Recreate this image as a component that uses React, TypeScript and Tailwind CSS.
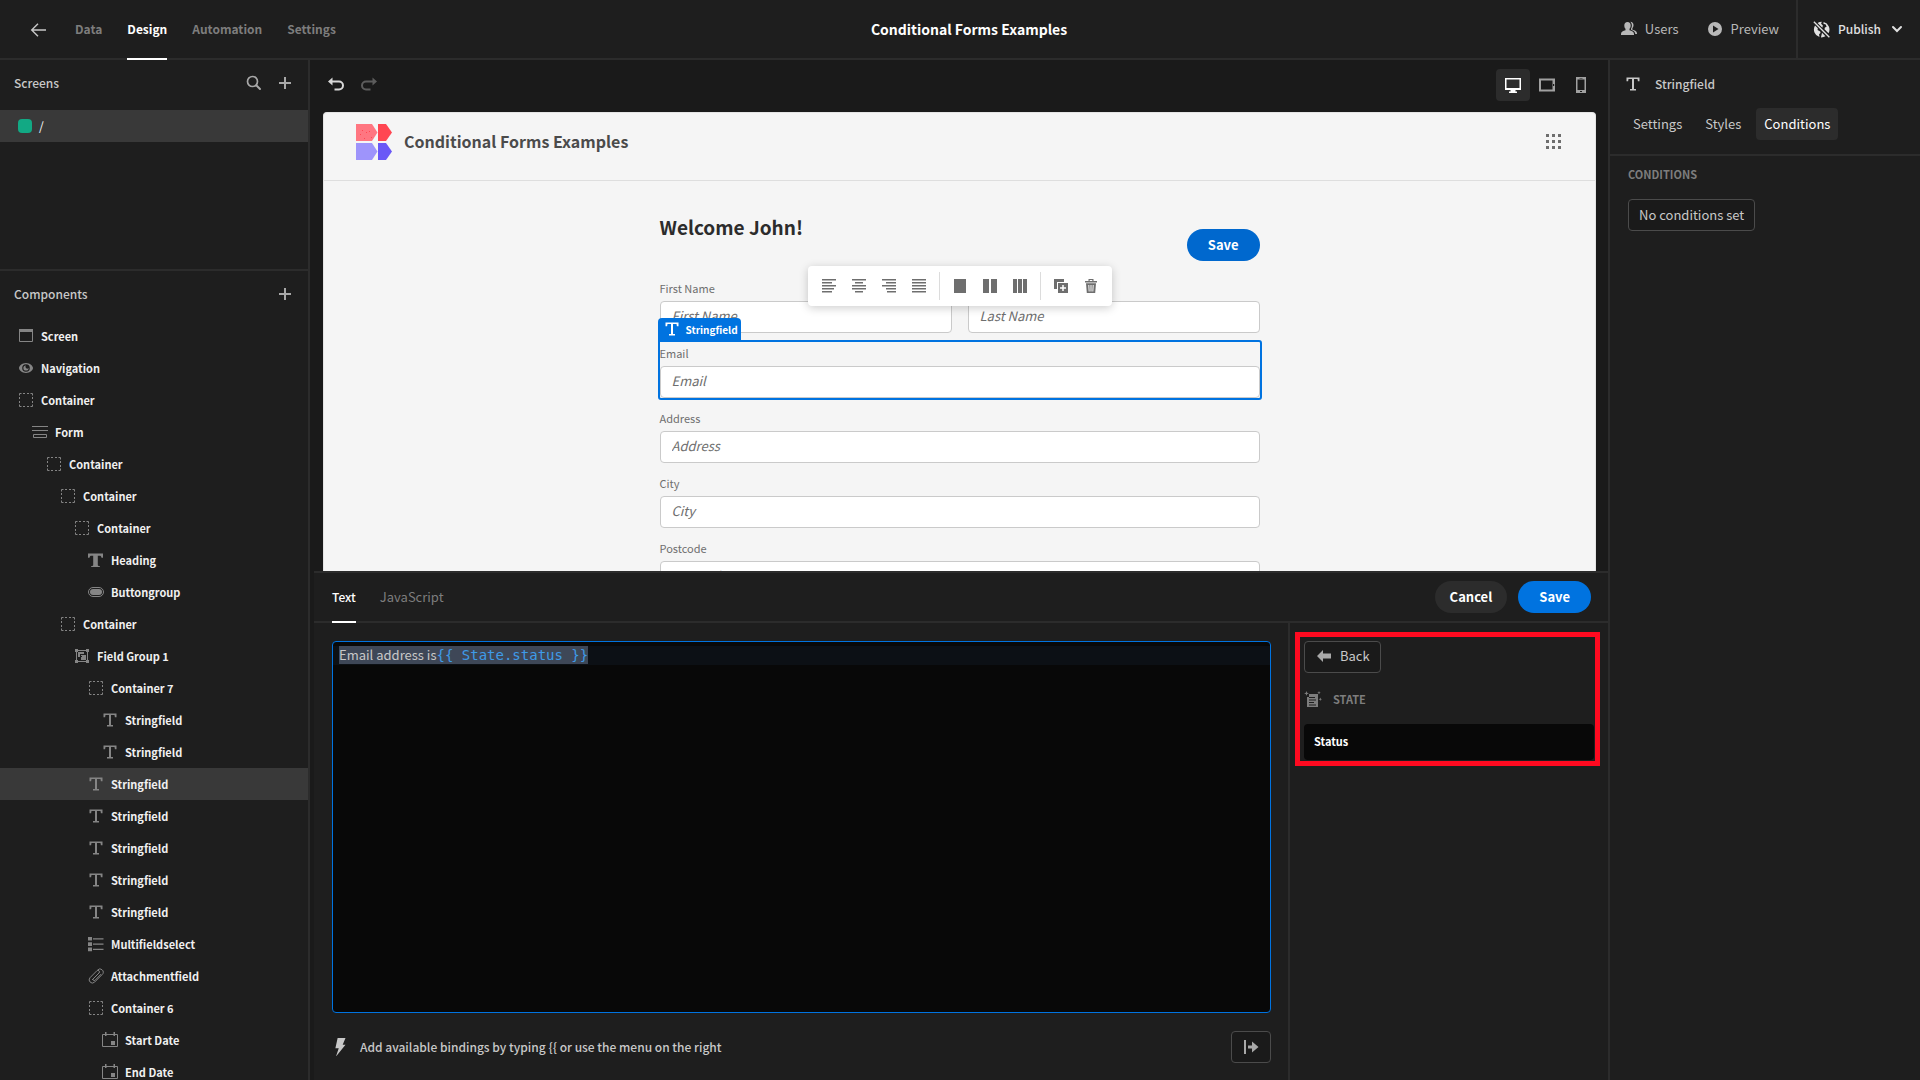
import React from "react";

type IconProps = { className?: string };

function Svg({ children, className = "size-4", box = 16 }: IconProps & { children: React.ReactNode; box?: number }) {
  return (
    <svg viewBox={`0 0 ${box} ${box}`} className={`${className} shrink-0`} fill="currentColor" aria-hidden="true">
      {children}
    </svg>
  );
}

const ContainerIcon = () => (
  <Svg>
    <path
      fill="none"
      stroke="currentColor"
      d="M1.5 3.5v-2h2M5 1.5h2M9 1.5h2M12.500 1.500h2v2M14.500 5v2M14.500 9v2M14.500 12.500v2h-2M11 14.500H9M7 14.500H5M3.500 14.500h-2v-2M1.500 11V9M1.500 7V5"
    />
  </Svg>
);
const ScreenIcon = () => (
  <Svg>
    <path d="M1 1h14v3H1z" />
    <path fill="none" stroke="currentColor" d="M1.500 1.500h13v12h-13z" />
  </Svg>
);
const EyeIcon = () => (
  <Svg>
    <path
      fillRule="evenodd"
      d="M8 3C4 3 1 6 1 8s3 5 7 5 7-3 7-5-3-5-7-5zm0 1.200a3.800 3.800 0 1 1 0 7.600 3.800 3.800 0 0 1 0-7.600z"
    />
    <path fillRule="evenodd" d="M8 5.400A2.600 2.600 0 1 0 10.600 8 1.300 1.300 0 0 1 8 5.400z" />
  </Svg>
);
const FormIcon = () => (
  <Svg>
    <path fill="none" stroke="currentColor" d="M0 2.500h16M0 6.500h16M1.500 10.500h13v3h-13z" />
  </Svg>
);
const HeadingIcon = () => (
  <Svg>
    <path d="M0 1.500h15v4.300h-1.500C13.300 4.300 12.800 3.700 11.500 3.700h-1.700V13c0 .7.500 1 2 1v1H3.200v-1c1.500 0 2-.3 2-1V3.700H3.500C2.200 3.700 1.700 4.300 1.500 5.800H0z" />
  </Svg>
);
const ButtonIcon = () => (
  <Svg>
    <rect x="0.500" y="3.500" width="15" height="9" rx="4.500" fill="none" stroke="currentColor" />
    <rect x="2" y="5" width="12" height="6" rx="3" />
  </Svg>
);
const GroupIcon = () => (
  <Svg>
    <path fill="none" stroke="currentColor" d="M2.500 2.500h11v11h-11z" />
    <path d="M1 1h3v3H1zM12 1h3v3h-3zM1 12h3v3H1zM12 12h3v3h-3z" />
    <path fillRule="evenodd" d="M4 4h6v2H6v3H4zM7 7h5v5H7V9h1V8H7z" />
  </Svg>
);
const TextIcon = ({ className }: IconProps) => (
  <Svg className={className}>
    <path d="M1.500 1.500h13v3.700h-1.600L12.500 3H9v10h2v1.500H5V13h2V3H3.500l-.4 2.200H1.500z" />
  </Svg>
);
const ListIcon = () => (
  <Svg>
    <path d="M0 1h4v3.600H0zM5 2.200h10.500v1.200H5zM0 6.300h4v3.600H0zM5 7.500h10.500v1.200H5zM0 11.600h4v3.600H0zM5 12.800h10.500V14H5z" />
  </Svg>
);
const ClipIcon = () => (
  <Svg>
    <path
      fill="none"
      stroke="currentColor"
      strokeLinecap="round"
      d="M4.300 11.700 11 5a1.500 1.500 0 0 0-2.200-2.200L1.900 9.800a3.200 3.200 0 0 0 4.500 4.500l7.700-7.700a3 3 0 0 0 0-4.800 3 3 0 0 0-4.300 0M11 5l-5.600 5.700a1.100 1.100 0 0 0 1.600 1.600l5.800-5.900"
    />
  </Svg>
);
const DateIcon = () => (
  <Svg>
    <path fill="none" stroke="currentColor" d="M.500 2.500h15v12H.500z" />
    <path d="M3 0h1.500v4H3zM11.500 0H13v4h-1.500zM9 9h4v4H9z" />
  </Svg>
);

type Kind = keyof typeof kinds;
const kinds = {
  screen: ScreenIcon,
  eye: EyeIcon,
  container: ContainerIcon,
  form: FormIcon,
  heading: HeadingIcon,
  button: ButtonIcon,
  group: GroupIcon,
  text: TextIcon,
  list: ListIcon,
  clip: ClipIcon,
  date: DateIcon,
};

const tree: { label: string; depth: number; kind: Kind; selected?: boolean }[] = [
  { label: "Screen", depth: 0, kind: "screen" },
  { label: "Navigation", depth: 0, kind: "eye" },
  { label: "Container", depth: 0, kind: "container" },
  { label: "Form", depth: 1, kind: "form" },
  { label: "Container", depth: 2, kind: "container" },
  { label: "Container", depth: 3, kind: "container" },
  { label: "Container", depth: 4, kind: "container" },
  { label: "Heading", depth: 5, kind: "heading" },
  { label: "Buttongroup", depth: 5, kind: "button" },
  { label: "Container", depth: 3, kind: "container" },
  { label: "Field Group 1", depth: 4, kind: "group" },
  { label: "Container 7", depth: 5, kind: "container" },
  { label: "Stringfield", depth: 6, kind: "text" },
  { label: "Stringfield", depth: 6, kind: "text" },
  { label: "Stringfield", depth: 5, kind: "text", selected: true },
  { label: "Stringfield", depth: 5, kind: "text" },
  { label: "Stringfield", depth: 5, kind: "text" },
  { label: "Stringfield", depth: 5, kind: "text" },
  { label: "Stringfield", depth: 5, kind: "text" },
  { label: "Multifieldselect", depth: 5, kind: "list" },
  { label: "Attachmentfield", depth: 5, kind: "clip" },
  { label: "Container 6", depth: 5, kind: "container" },
  { label: "Start Date", depth: 6, kind: "date" },
  { label: "End Date", depth: 6, kind: "date" },
];

const indents = ["pl-[18px]", "pl-8", "pl-[46px]", "pl-[60px]", "pl-[74px]", "pl-[88px]", "pl-[102px]"];

const PlusIcon = () => (
  <Svg className="size-4 text-[#a8a8a8]">
    <path d="M7 2h2v5h5v2H9v5H7V9H2V7h5z" />
  </Svg>
);

function Header() {
  return (
    <header className="flex h-[60px] shrink-0 items-stretch justify-between border-b-2 border-[#2c2c2c]">
      <div className="flex flex-1 items-stretch">
        <button aria-label="Back to apps" className="mr-7 ml-[30px] text-[#c8c8c8]">
          <Svg className="size-[17px]" box={17}>
            <path fill="none" stroke="currentColor" strokeWidth="1.400" d="M16 9H2M8 2.700 1.700 9 8 15.300" />
          </Svg>
        </button>
        <nav className="flex gap-[25px] text-[12px] font-bold text-[#7d7d7d]">
          {["Data", "Design", "Automation", "Settings"].map((t) => (
            <a
              key={t}
              href={`#${t.toLowerCase()}`}
              className={
                t === "Design"
                  ? "-mb-[2px] flex items-center border-b-2 border-white text-white"
                  : "flex items-center"
              }
            >
              {t}
            </a>
          ))}
        </nav>
      </div>
      <h1 className="flex items-center pl-[18px] text-[14px] font-bold text-white">Conditional Forms Examples</h1>
      <div className="flex flex-1 items-stretch justify-end text-[13px] text-[#b8b8b8]">
        <button className="mr-7 flex items-center gap-2">
          <Svg>
            <path d="M6.500 1c2 0 3.200 1.400 3.200 3.500 0 1.400-.5 2.600-1.200 3.300v1.400c2.300.6 4.500 1.600 4.500 3.800v1H0v-1c0-2.200 2.200-3.200 4.500-3.800V7.800c-.7-.7-1.200-1.900-1.200-3.300C3.300 2.400 4.500 1 6.500 1z" />
            <path d="M9.300.7c2 0 3.200 1.300 3.200 3.400 0 1.400-.4 2.400-1.100 3.200v1.500c2.600.6 4.600 1.500 4.600 3.600v.6h-1.700c-.2-2.200-2-3.500-4.300-4.300v-.9c.6-.9.9-2 .9-3.200 0-1.700-.6-3-1.600-3.900z" />
          </Svg>
          Users
        </button>
        <button className="mr-[17px] flex items-center gap-2">
          <Svg>
            <path fillRule="evenodd" d="M8 1a7 7 0 1 0 0 14A7 7 0 0 0 8 1zM6 4.500 11.500 8 6 11.500z" />
          </Svg>
          Preview
        </button>
        <button className="flex items-center gap-2 border-l-2 border-[#2c2c2c] pr-[15px] pl-[15px] text-[12px] font-medium text-[#e0e0e0]">
          <Svg className="size-[17px]">
            <path d="M4.300 1.900A7.400 7.400 0 0 1 8.300.6L7.600 2.600l1.700 1.600-.5 2.200zM10 .9a7.400 7.400 0 0 1 4.600 10.700l-3.800-3.800.4-1.600 1.600-.7-.8-2.200-2.200-.6zM1.900 4.300l2.600 2.600-.2 1.600 2.500 1.400.3 1.300-1.400 1.300.4 2.600A7.400 7.400 0 0 1 1.900 4.300zM8.500 11l3.200 3.400a7.400 7.400 0 0 1-4.200 1z" />
            <path stroke="currentColor" strokeWidth="1.300" d="m.8.8 14.600 14.600" />
          </Svg>
          Publish
          <Svg>
            <path fill="none" stroke="currentColor" strokeWidth="2" strokeLinecap="round" d="M4 6l4 4 4-4" />
          </Svg>
        </button>
      </div>
    </header>
  );
}

function Sidebar() {
  return (
    <aside className="flex w-[310px] shrink-0 flex-col border-r-2 border-[#2c2c2c]">
      <section className="flex h-[211px] shrink-0 flex-col border-b-2 border-[#2c2c2c]">
        <div className="flex h-[50px] items-center gap-[15px] pr-[15px] pb-1 pl-[14px]">
          <h2 className="flex-1 text-[12px] font-medium text-[#c8c8c8]">Screens</h2>
          <button aria-label="Search screens" className="text-[#a8a8a8]">
            <Svg>
              <circle cx="6.500" cy="6.500" r="5" fill="none" stroke="currentColor" strokeWidth="1.700" />
              <path stroke="currentColor" strokeWidth="2" strokeLinecap="round" d="m10.500 10.500 3.500 3.500" />
            </Svg>
          </button>
          <button aria-label="Add screen">
            <PlusIcon />
          </button>
        </div>
        <button className="flex h-8 items-center gap-[7px] bg-[#393939] pl-[18px] text-[12px] text-white">
          <span className="size-[14px] rounded-[4px] bg-[#12a984]" />/
        </button>
      </section>
      <section className="flex min-h-0 flex-1 flex-col overflow-hidden">
        <div className="flex h-[49px] shrink-0 items-center pr-[15px] pb-[3px] pl-[14px]">
          <h2 className="flex-1 text-[12px] font-medium text-[#c8c8c8]">Components</h2>
          <button aria-label="Add component">
            <PlusIcon />
          </button>
        </div>
        <ul className="shrink-0">
          {tree.map((n, i) => {
            const Icon = kinds[n.kind];
            return (
              <li key={i} className={n.selected ? "bg-[#393939]" : ""}>
                <button
                  className={`flex h-8 w-full items-center gap-[7px] text-[11px] font-bold text-[#f0f0f0] ${indents[n.depth]}`}
                >
                  <span className="text-[#858585]">
                    <Icon />
                  </span>
                  {n.label}
                </button>
              </li>
            );
          })}
        </ul>
      </section>
    </aside>
  );
}

function Field({ label }: { label: string }) {
  return (
    <label className="block min-w-0 flex-1 text-[11px] leading-[22px] text-[#6e6e6e]">
      <span className="block h-6">{label}</span>
      <input
        placeholder={label}
        className="block h-8 w-full rounded-[4px] border border-[#cacaca] bg-white px-[11px] pb-[3px] text-[13px] placeholder:text-[#6e6e6e] placeholder:italic"
      />
    </label>
  );
}

const bars = (widths: number[], align: "l" | "c" | "r") =>
  widths.map((w, i) => {
    const x = align === "l" ? 1 : align === "r" ? 15 - w : 8 - w / 2;
    return <path key={i} d={`M${x} ${1 + i * 3}h${w}v1.500h-${w}z`} />;
  });

const tools: { name: string; art: React.ReactNode; divider?: boolean }[] = [
  { name: "Align left", art: bars([14, 10, 14, 12, 10], "l") },
  { name: "Align center", art: bars([14, 8, 14, 14, 8], "c") },
  { name: "Align right", art: bars([14, 10, 14, 10, 9], "r") },
  { name: "Justify", art: bars([14, 14, 14, 14, 14], "l") },
  { name: "One column", art: <path d="M2 1h12v14H2z" />, divider: true },
  { name: "Two columns", art: <path d="M1 1h6v14H1zM9 1h6v14H9z" /> },
  { name: "Three columns", art: <path d="M1 1h4v14H1zM6 1h4v14H6zM11 1h4v14h-4z" /> },
  {
    name: "Duplicate",
    art: (
      <path
        fillRule="evenodd"
        d="M1 1h10v3H4v7H1zM5 5h10v10H5zM9.250 7v2.250H7v1.500h2.250V13h1.500v-2.250H13v-1.500h-2.250V7z"
      />
    ),
    divider: true,
  },
  {
    name: "Delete",
    art: (
      <path
        fillRule="evenodd"
        d="M5.500 1h5v2H14v1.500H2V3h3.500zM6.700 2v1h2.600V2zM3 5.300h10L12.200 15H3.800zM5.300 7l.4 6.500h.9L6.300 7zM7.500 7v6.500h1V7zM9.700 7l-.3 6.500h.9l.4-6.500z"
      />
    ),
  },
];

function FloatingToolbar() {
  return (
    <div
      role="toolbar"
      aria-label="Component layout"
      className="absolute top-[37px] left-1/2 z-20 flex h-10 -translate-x-1/2 items-center rounded-[4px] bg-white px-[6px] text-[#6e6e6e] shadow-[0_2px_10px_rgba(0,0,0,0.2)]"
    >
      {tools.map((t) => (
        <React.Fragment key={t.name}>
          {t.divider && <span className="mx-[5px] h-7 w-px bg-[#dcdcdc]" />}
          <button aria-label={t.name} className="flex w-[30px] justify-center">
            <Svg>{t.art}</Svg>
          </button>
        </React.Fragment>
      ))}
    </div>
  );
}

function Preview() {
  return (
    <div className="mr-3 ml-[13px] min-h-0 flex-1 overflow-hidden rounded-t-[4px] border border-b-0 border-[#e4e4e4] bg-[#f5f5f5] text-[#4b4b4b]">
      <div className="flex h-[68px] items-start justify-between border-b border-[#dedede] pr-[33px] pl-8">
        <div className="flex items-start gap-3 pt-[11px]">
          <svg viewBox="0 0 36 36" className="size-9" aria-hidden="true">
            <path fill="#ff7681" d="M0 0h16l5.500 8.500L16 17H0z" />
            <path fill="#ff4652" d="M22 0h8l6 8.500-6 8.500h-8z" />
            <path fill="#9e94fb" d="M0 19h16l5.500 8.500L16 36H0z" />
            <path fill="#6a58f6" d="M22 19h8l6 8.500-6 8.500h-8z" />
            <path fill="#ff4652" d="M6 6h1v1H6zM10 8h1v1h-1zM13 7h1v1h-1zM4 10h1v1H4zM8 14h1v1H8zM15 13h1v1h-1z" />
          </svg>
          <h2 className="text-[16px] leading-[34px] font-bold">Conditional Forms Examples</h2>
        </div>
        <button aria-label="Apps" className="pt-[20px] text-[#6e6e6e]">
          <Svg className="size-[17px]" box={17}>
            <path d="M1 1h3v3H1zM7 1h3v3H7zM13 1h3v3h-3zM1 7h3v3H1zM7 7h3v3H7zM13 7h3v3h-3zM1 13h3v3H1zM7 13h3v3H7zM13 13h3v3h-3z" />
          </Svg>
        </button>
      </div>
      <form className="mx-auto w-full max-w-[600px] pt-[32px]" onSubmit={(e) => e.preventDefault()}>
        <div className="flex h-16 justify-between">
          <h3 className="text-[19px] leading-7 font-bold text-[#2c2c2c]">Welcome John!</h3>
          <button className="mt-4 h-8 rounded-full bg-[#0068ce] px-[21px] text-[13px] font-bold text-white">Save</button>
        </div>
        <div className="relative flex flex-col gap-[9px]">
          <div className="flex gap-4">
            <Field label="First Name" />
            <Field label="Last Name" />
          </div>
          <div className="relative">
            <Field label="Email" />
            <div className="pointer-events-none absolute -inset-x-[2px] -top-[2px] -bottom-[2px] rounded-[3px] rounded-tl-none border-2 border-[#0073e0]" />
            <div className="absolute bottom-full -left-[2px] z-10 flex h-6 items-center gap-[6px] rounded-t-[4px] bg-[#0073e0] pr-[3px] pb-[2px] pl-[6px] text-[10px] font-bold text-white">
              <TextIcon />
              Stringfield
            </div>
          </div>
          <Field label="Address" />
          <Field label="City" />
          <Field label="Postcode" />
          <div className="absolute inset-x-0 -top-[48px]">
            <FloatingToolbar />
          </div>
        </div>
      </form>
    </div>
  );
}

function BindingDrawer() {
  return (
    <section className="ml-1 flex h-[509px] shrink-0 flex-col border-t-2 border-[#2c2c2c] bg-[#1e1e1e]">
      <div className="flex h-[50px] shrink-0 items-stretch border-b-2 border-[#2c2c2c] pr-[17px] pl-[18px] text-[13px]">
        <div role="tablist" className="flex flex-1 gap-6">
          <button
            role="tab"
            aria-selected="true"
            className="-mb-[2px] border-b-2 border-white text-[12px] font-medium text-white"
          >
            Text
          </button>
          <button role="tab" aria-selected="false" className="text-[#7d7d7d]">
            JavaScript
          </button>
        </div>
        <div className="flex items-center gap-[11px] font-bold text-white">
          <button className="h-8 rounded-full bg-[#2c2c2c] px-[15px]">Cancel</button>
          <button className="h-8 rounded-full bg-[#0073e0] px-[21px]">Save</button>
        </div>
      </div>
      <div className="flex min-h-0 flex-1">
        <div className="flex min-w-0 flex-1 flex-col pr-[17px] pb-[17px] pl-[18px] pt-[18px]">
          <div
            role="textbox"
            aria-label="Binding text"
            aria-multiline="true"
            className="min-h-0 flex-1 overflow-hidden rounded-[4px] border border-[#0073e0] bg-[#080808] pt-1"
          >
            <div className="h-[19px] bg-[#0c1015] pl-[6px] text-[13px] leading-[18px] text-[#c8c8c8]">
              <span className="inline-flex h-[18px] items-center bg-[#3e4757] whitespace-pre">
                Email address is
                <span className="font-['DejaVu_Sans_Mono',monospace] text-[14px] text-[#3f9be8]">
                  {"{{ State.status }}"}
                </span>
              </span>
            </div>
          </div>
          <div className="mt-[18px] flex h-8 shrink-0 items-center text-[12px] font-medium text-[#c8c8c8]">
            <Svg className="mr-[10px] size-[18px]">
              <path d="M5 0h7L9.500 6H12L3.500 16.500 6 9H3z" />
            </Svg>
            <p className="flex-1">{"Add available bindings by typing {{ or use the menu on the right"}</p>
            <button
              aria-label="Collapse bindings menu"
              className="flex h-8 w-10 items-center justify-center rounded-[4px] border border-[#4b4b4b] bg-[#1a1a1a] text-[#a8a8a8]"
            >
              <Svg>
                <path d="M1 1h2v14H1zM5 6.500h4V2.500L15.500 8 9 13.500v-4H5z" />
              </Svg>
            </button>
          </div>
        </div>
        <div className="w-[320px] shrink-0 border-l-2 border-[#2c2c2c] pt-[9px] pr-2 pl-[5px]">
          <div className="h-[134px] border-[5px] border-[#ff0a20] pt-1 pr-[1px] pl-1">
            <button className="flex h-8 items-center gap-2 rounded-[4px] border border-[#4b4b4b] bg-[#1a1a1a] pr-[10px] pb-[2px] pl-[11px] text-[13px] text-[#c8c8c8]">
              <Svg className="size-4 text-[#a8a8a8]">
                <path d="M1 8l6-6v3.500h8v5H7V14z" />
              </Svg>
              Back
            </button>
            <div className="flex h-[51px] items-center gap-[11px] pt-[2px] text-[11px] font-bold text-[#7d7d7d]">
              <Svg className="size-[18px]" box={18}>
                <path
                  fillRule="evenodd"
                  d="M5 3h9v13H3V6h2zM5 6v1h6V6zM5 8.500v1h7v-1zM5 11v1h5v-1zM5 13.500v1h7v-1z"
                />
                <path d="M2.500 0l.7 1.700 1.700.7-1.700.7-.7 1.700-.7-1.700L.1 2.400l1.700-.7zM15 0l.5 1.200 1.200.5-1.200.5-.5 1.200-.5-1.200-1.200-.5 1.200-.5zM16.300 6.500l.5 1.200 1.200.5-1.200.5-.5 1.200-.5-1.200-1.200-.5 1.200-.5z" />
              </Svg>
              <h4>STATE</h4>
            </div>
            <button className="block h-9 w-full rounded-[4px] bg-[#080808] pb-[2px] pl-[10px] text-left text-[11px] font-bold text-white">
              Status
            </button>
          </div>
        </div>
      </div>
    </section>
  );
}

function Canvas() {
  return (
    <main className="flex min-w-0 flex-1 flex-col bg-[#1a1a1a]">
      <div className="flex h-[52px] shrink-0 items-center justify-between pr-[10px] pb-[2px] pl-[18px]">
        <div className="flex gap-[17px]">
          <button aria-label="Undo" className="text-[#d8d8d8]">
            <Svg>
              <path d="M0 4.500 4.500.5v3H11a5 5 0 0 1 0 10H6.500v-2H11a3 3 0 0 0 0-6H4.500v3z" />
            </Svg>
          </button>
          <button aria-label="Redo" className="text-[#5c5c5c]">
            <Svg>
              <path d="M16 4.500 11.500.5v3H5a5 5 0 0 0 0 10h4.500v-2H5a3 3 0 0 1 0-6h6.500v3z" />
            </Svg>
          </button>
        </div>
        <div className="flex">
          <button
            aria-label="Desktop"
            className="flex h-8 w-[34px] items-center justify-center rounded-[4px] bg-[#2c2c2c] text-white"
          >
            <Svg>
              <path fillRule="evenodd" d="M0 1h16v12h-5.500v1.500H12V16H4v-1.500h1.500V13H0zM1.500 2.500v8.500h13V2.500z" />
            </Svg>
          </button>
          <button aria-label="Tablet" className="flex h-8 w-[34px] items-center justify-center text-[#a0a0a0]">
            <Svg>
              <path fillRule="evenodd" d="M0 1.500h16v13H0zM2 3.500v9h11.500v-9zM14 7v2h1.200V7z" />
            </Svg>
          </button>
          <button aria-label="Mobile" className="flex h-8 w-[34px] items-center justify-center text-[#a0a0a0]">
            <Svg>
              <path fillRule="evenodd" d="M3 0h10v16H3zM4.500 2.500v10.500h7V2.500zM7 14v1h2v-1zM6.500 1v.6h3V1z" />
            </Svg>
          </button>
        </div>
      </div>
      <Preview />
      <BindingDrawer />
    </main>
  );
}

function Inspector() {
  return (
    <aside className="w-[312px] shrink-0 border-l-2 border-[#2c2c2c] text-[13px] text-[#c8c8c8]">
      <div className="flex h-[96px] flex-col border-b-2 border-[#2c2c2c] pl-[15px]">
        <div className="flex h-12 items-center gap-[14px]">
          <TextIcon />
          <h2 className="text-[12px] font-medium">Stringfield</h2>
        </div>
        <div role="tablist" className="flex">
          <button role="tab" aria-selected="false" className="h-8 px-2">
            Settings
          </button>
          <button role="tab" aria-selected="false" className="ml-[7px] h-8 px-2">
            Styles
          </button>
          <button role="tab" aria-selected="true" className="ml-[7px] h-8 rounded-[4px] bg-[#2c2c2c] px-2 text-white">
            Conditions
          </button>
        </div>
      </div>
      <div className="flex flex-col items-start px-[18px] pt-[10px]">
        <h3 className="text-[11px] leading-4 font-bold text-[#7d7d7d]">CONDITIONS</h3>
        <button className="mt-[17px] h-8 rounded-[4px] border border-[#4b4b4b] bg-[#1a1a1a] px-[10px]">
          No conditions set
        </button>
      </div>
    </aside>
  );
}

export default function App() {
  return (
    <div className="flex h-screen flex-col overflow-hidden bg-[#1e1e1e] font-['Noto_Sans_CJK_SC','Noto_Sans',sans-serif]">
      <Header />
      <div className="flex min-h-0 flex-1">
        <Sidebar />
        <Canvas />
        <Inspector />
      </div>
    </div>
  );
}
